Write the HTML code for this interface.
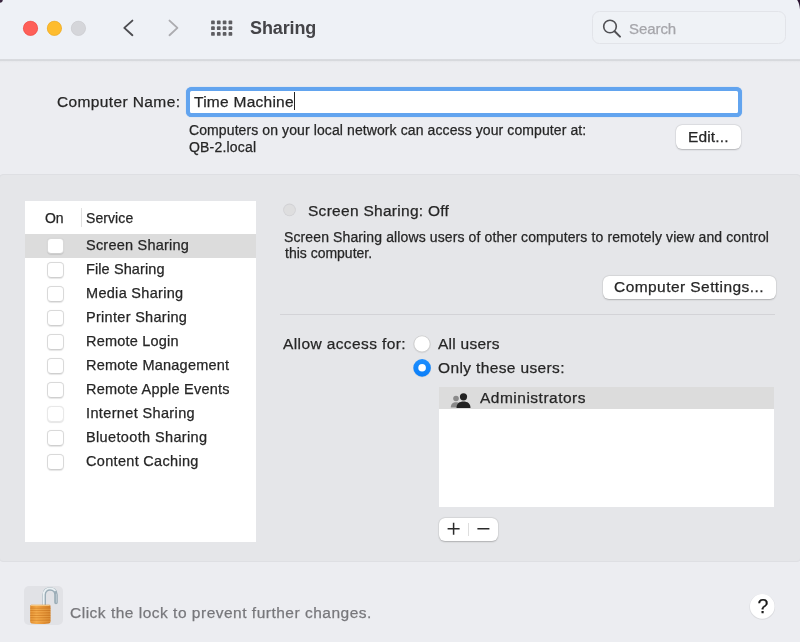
<!DOCTYPE html>
<html lang="en">
<head>
<meta charset="utf-8">
<title>Sharing</title>
<style>
*{box-sizing:border-box;margin:0;padding:0}
html,body{width:800px;height:642px;overflow:hidden;background:#ecedf1}
body{filter:blur(.35px);position:relative;font-family:"Liberation Sans",sans-serif;color:#262626;font-size:15px}
.abs{position:absolute}
.t{will-change:transform;-webkit-text-stroke:.25px currentColor;position:absolute;white-space:nowrap;line-height:20px;height:20px}
#toolbar{left:0;top:0;width:800px;height:59px;background:#eef1f6}
#tbline{left:0;top:58.6px;width:800px;height:4.4px;background:linear-gradient(#eef1f6 0,#d6d8dc 14%,#d7d9dd 38%,#e6e7eb 52%,#ecedf1 100%)}
.corner{width:8px;height:8px;background:#2a2230}
.tl{width:14.6px;height:14.6px;border-radius:50%;top:21.3px}
#group{left:-1px;top:174px;width:802px;height:387.7px;background:#e5e6e9;border-radius:4px;border:1.2px solid #dedfe3}
#list{left:24.5px;top:201px;width:231.7px;height:340.7px;background:#fff}
.cb{position:absolute;left:47.3px;width:16.3px;height:16px;border-radius:4.2px;background:#fff;border:1px solid #d9d9d9;border-bottom-color:#cfcfcf;box-shadow:0 .5px 1px rgba(0,0,0,.1)}
.btn{position:absolute;background:#fff;border-radius:6px;box-shadow:0 0 0 0.5px rgba(0,0,0,.05),0 .6px 1.6px rgba(0,0,0,.22)}
.radio{position:absolute;width:16px;height:16px;border-radius:50%}
</style>
</head>
<body>
<div class="abs" id="toolbar"></div>
<div class="abs" id="tbline"></div>

<!-- traffic lights -->
<svg class="abs" style="left:20px;top:18px" width="72" height="22" viewBox="0 0 72 22">
  <circle cx="10.5" cy="10.3" r="7.4" fill="#fe5f58"/><circle cx="10.5" cy="10.3" r="7.15" fill="none" stroke="#e9453e" stroke-width=".5"/>
  <circle cx="34.4" cy="10.3" r="7.4" fill="#febc2e"/><circle cx="34.4" cy="10.3" r="7.15" fill="none" stroke="#e3a325" stroke-width=".5"/>
  <circle cx="58.4" cy="10.3" r="7.4" fill="#d5d6da"/><circle cx="58.4" cy="10.3" r="7.15" fill="none" stroke="#c6c7cb" stroke-width=".5"/>
</svg>

<!-- nav icons -->
<svg class="abs" style="left:118px;top:14px" width="120" height="28" viewBox="0 0 120 28">
  <path d="M14.4 6.6 L6.3 13.9 L14.4 21.2" fill="none" stroke="#4c4c50" stroke-width="1.9" stroke-linecap="round" stroke-linejoin="round"/>
  <path d="M51.5 6.6 L59.4 13.9 L51.5 21.2" fill="none" stroke="#acacb0" stroke-width="1.9" stroke-linecap="round" stroke-linejoin="round"/>
  <g fill="#5e5e62"><rect x="93.10" y="6.60" width="3.7" height="3.7" rx=".9"/><rect x="98.92" y="6.60" width="3.7" height="3.7" rx=".9"/><rect x="104.74" y="6.60" width="3.7" height="3.7" rx=".9"/><rect x="110.56" y="6.60" width="3.7" height="3.7" rx=".9"/><rect x="93.10" y="12.35" width="3.7" height="3.7" rx=".9"/><rect x="98.92" y="12.35" width="3.7" height="3.7" rx=".9"/><rect x="104.74" y="12.35" width="3.7" height="3.7" rx=".9"/><rect x="110.56" y="12.35" width="3.7" height="3.7" rx=".9"/><rect x="93.10" y="18.10" width="3.7" height="3.7" rx=".9"/><rect x="98.92" y="18.10" width="3.7" height="3.7" rx=".9"/><rect x="104.74" y="18.10" width="3.7" height="3.7" rx=".9"/><rect x="110.56" y="18.10" width="3.7" height="3.7" rx=".9"/></g>
</svg>
<div class="t" id="title" style="-webkit-text-stroke:0;left:249.87px;top:18px;font-size:18px;font-weight:bold;color:#444448;letter-spacing:-0.115px">Sharing</div>

<!-- search -->
<div class="abs" id="search" style="left:592.2px;top:11.3px;width:193.8px;height:33px;border-radius:7.5px;border:1px solid #e2e4e9;background:#eff2f6"></div>
<svg class="abs" style="left:599px;top:16px" width="24" height="24" viewBox="0 0 24 24"><circle cx="11" cy="10.5" r="6.3" fill="none" stroke="#505054" stroke-width="1.6"/><path d="M15.6 15.2 L21 20.6" stroke="#505054" stroke-width="2" stroke-linecap="round"/></svg>
<div class="t" id="searchtxt" style="left:628.66px;top:18.6px;font-size:15px;color:#a5a5aa;letter-spacing:-0.071px">Search</div>

<!-- computer name -->
<div class="t" id="cnlabel" style="left:56.52px;top:92.3px;font-size:15.5px;letter-spacing:0.379px">Computer Name:</div>
<div class="abs" id="field" style="left:186.1px;top:86.9px;width:556.2px;height:30.1px;border-radius:5.5px;background:#fff;border:4px solid #62a4ef;box-shadow:0 0 .8px #62a4ef"></div>
<div class="t" id="cnvalue" style="left:194.30px;top:92.3px;font-size:15.5px;letter-spacing:0.260px">Time Machine</div>
<div class="abs" style="left:294px;top:92.3px;width:1.2px;height:17.6px;background:#222"></div>
<div class="t" id="info1" style="left:188.75px;top:120px;font-size:14px;letter-spacing:0.099px">Computers on your local network can access your computer at:</div>
<div class="t" id="info2" style="left:189.33px;top:136.6px;font-size:14px;letter-spacing:0.191px">QB-2.local</div>
<div class="btn" id="editbtn" style="left:676px;top:125px;width:64.5px;height:24.4px"></div>
<div class="t" id="edittxt" style="left:687.88px;top:127.3px;font-size:15.5px;letter-spacing:0.134px">Edit...</div>

<!-- group box -->
<div class="abs" id="group"></div>

<!-- service list -->
<div class="abs" id="list"></div>
<div class="abs" style="left:24.5px;top:234.2px;width:231.7px;height:23.6px;background:#dcdcdc"></div>
<div class="abs" style="left:80.8px;top:208.3px;width:1px;height:19px;background:#e0e0e0"></div>
<div class="t" id="hon" style="left:45.37px;top:207.7px;font-size:14px;letter-spacing:-0.163px">On</div>
<div class="t" id="hservice" style="left:85.9px;top:207.7px;font-size:14px;letter-spacing:0.080px">Service</div>

<div class="cb" style="top:238.3px"></div>
<div class="cb" style="top:262.3px"></div>
<div class="cb" style="top:286.3px"></div>
<div class="cb" style="top:310.3px"></div>
<div class="cb" style="top:334.3px"></div>
<div class="cb" style="top:358.3px"></div>
<div class="cb" style="top:382.3px"></div>
<div class="cb" style="top:406.3px;border-color:#e8e8e8"></div>
<div class="cb" style="top:430.3px"></div>
<div class="cb" style="top:454.3px"></div>

<div class="t s" id="s1" style="left:85.6px;top:235px;letter-spacing:0.221px">Screen Sharing</div>
<div class="t s" id="s2" style="left:85.6px;top:259px;letter-spacing:0.104px">File Sharing</div>
<div class="t s" id="s3" style="left:85.6px;top:283px;letter-spacing:0.300px">Media Sharing</div>
<div class="t s" id="s4" style="left:85.6px;top:307px;letter-spacing:0.300px">Printer Sharing</div>
<div class="t s" id="s5" style="left:85.6px;top:331px;letter-spacing:0.198px">Remote Login</div>
<div class="t s" id="s6" style="left:85.6px;top:355px;letter-spacing:0.232px">Remote Management</div>
<div class="t s" id="s7" style="left:85.6px;top:379px;letter-spacing:0.230px">Remote Apple Events</div>
<div class="t s" id="s8" style="left:85.6px;top:403px;letter-spacing:0.363px">Internet Sharing</div>
<div class="t s" id="s9" style="left:85.6px;top:427px;letter-spacing:0.364px">Bluetooth Sharing</div>
<div class="t s" id="s10" style="left:85.6px;top:451px;letter-spacing:0.313px">Content Caching</div>

<!-- right pane -->
<svg class="abs" style="left:280px;top:200px" width="20" height="20" viewBox="0 0 20 20"><circle cx="9.5" cy="9.9" r="6.3" fill="#d1d1d4"/><circle cx="9.5" cy="9.9" r="5.5" fill="#dededf"/></svg>
<div class="t" id="status" style="left:307.67px;top:200.5px;font-size:15.5px;letter-spacing:0.282px">Screen Sharing: Off</div>
<div class="t" id="desc1" style="left:283.55px;top:227.3px;font-size:14px;letter-spacing:0.118px">Screen Sharing allows users of other computers to remotely view and control</div>
<div class="t" id="desc2" style="left:284.70px;top:243.3px;font-size:14px;letter-spacing:-0.005px">this computer.</div>
<div class="btn" id="csbtn" style="left:602.5px;top:275.5px;width:173.7px;height:23.3px"></div>
<div class="t" id="cstxt" style="left:613.96px;top:277px;font-size:15.5px;letter-spacing:0.437px">Computer Settings...</div>
<div class="abs" style="left:280px;top:314px;width:495px;height:1px;background:#d3d3d7"></div>

<div class="t" id="allow" style="left:283.16px;top:333.5px;font-size:15.5px;letter-spacing:0.390px">Allow access for:</div>

<div class="t" id="allusers" style="left:437.99px;top:334.3px;font-size:15.5px;letter-spacing:0.259px">All users</div>

<svg class="abs" style="left:408px;top:330px" width="30" height="52" viewBox="0 0 30 52">
  <defs><linearGradient id="rb" x1="0" y1="0" x2="0" y2="1"><stop offset="0" stop-color="#1e8fff"/><stop offset="1" stop-color="#0a7ef8"/></linearGradient></defs>
  <circle cx="14" cy="14.5" r="8.9" fill="#000" opacity=".06"/>
  <circle cx="14" cy="14.1" r="8.5" fill="#cdcdcd"/>
  <circle cx="14" cy="13.9" r="7.7" fill="#fff"/>
  <circle cx="14.1" cy="38.3" r="9.1" fill="#000" opacity=".06"/>
  <circle cx="14.1" cy="37.9" r="8.8" fill="url(#rb)"/>
  <circle cx="14.1" cy="37.7" r="3.8" fill="#fff"/>
</svg>
<div class="t" id="onlyusers" style="left:438.00px;top:358.3px;font-size:15.5px;letter-spacing:0.366px">Only these users:</div>

<div class="abs" id="ulist" style="left:439px;top:387px;width:335.2px;height:120px;background:#fff"></div>
<div class="abs" style="left:439px;top:387px;width:335.2px;height:22.2px;background:#dcdcdc"></div>
<svg class="abs" style="left:449px;top:390.4px" width="24" height="20" viewBox="0 0 24 20">
  <circle cx="7" cy="8.5" r="2.8" fill="#8a8a8a"/>
  <path d="M1.8 17.6 C1.8 13.8 4 12.2 7 12.2 C8.6 12.2 9.8 12.6 10.6 13.3 L9 17.6 Z" fill="#8a8a8a"/>
  <circle cx="14.5" cy="6.8" r="3.6" fill="#222"/>
  <path d="M7.5 18 C7.5 13.5 10.5 11.5 14.5 11.5 C18.5 11.5 21.5 13.5 21.5 18 Z" fill="#222"/>
</svg>
<div class="t" id="admins" style="left:479.99px;top:388.2px;font-size:15.5px;letter-spacing:0.496px">Administrators</div>

<div class="btn" id="pmbtn" style="left:438.5px;top:518px;width:59.6px;height:23.2px"></div>
<div class="abs" style="left:468px;top:522.7px;width:1px;height:13.6px;background:#dedede"></div>
<svg class="abs" style="left:438.6px;top:517.3px" width="59" height="24" viewBox="0 0 59 24"><path d="M8.6 11.7 H20.6 M14.6 5.7 V17.7 M38.4 11.7 H50.4" stroke="#2a2a2a" stroke-width="1.5" fill="none"/></svg>

<!-- bottom -->
<div class="abs" style="left:23.5px;top:585.8px;width:39.4px;height:39.4px;border-radius:5px;background:#e1e2e6"></div>
<svg class="abs" style="left:24px;top:586px" width="39" height="39" viewBox="0 0 39 39">
  <defs>
    <linearGradient id="bd" x1="0" x2="1"><stop offset="0" stop-color="#e08a2c"/><stop offset=".3" stop-color="#f3a847"/><stop offset=".55" stop-color="#e9983a"/><stop offset="1" stop-color="#cf7c26"/></linearGradient>
  </defs>
  <path d="M20.2 20 V8.8 C20.2 4.9 22.8 3 26 3 C29.2 3 32 4.9 32 8.8 V16.4" fill="none" stroke="#9badb7" stroke-width="3.6" stroke-linecap="round"/>
  <path d="M19.7 20 V8.8 C19.7 4.6 22.6 2.4 26 2.4 C28 2.4 29.8 3.1 31 4.4" fill="none" stroke="#eaf0f3" stroke-width="1.8" stroke-linecap="round"/>
  <path d="M32.4 8 V16.2" fill="none" stroke="#b9c6ce" stroke-width="1.2" stroke-linecap="round"/>
  <path d="M6.2 20.3 C6.2 19.3 6.8 18.8 7.8 18.8 H24.9 C25.9 18.8 26.5 19.3 26.5 20.3 V35.6 C26.5 36.7 25.9 37.3 24.9 37.4 C19 38.3 13.5 38.3 7.8 37.4 C6.8 37.3 6.2 36.7 6.2 35.6 Z" fill="url(#bd)"/>
  <path d="M7 19.4 H25.7" stroke="#f8d08e" stroke-width="1" opacity=".9"/>
  <g stroke="#c77520" stroke-width=".75" opacity=".75"><path d="M6.2 22.3H26.5M6.2 24.7H26.5M6.2 27.1H26.5M6.2 29.5H26.5M6.2 31.9H26.5M6.2 34.3H26.5"/></g>
  <g stroke="#f6b85c" stroke-width=".6" opacity=".7"><path d="M6.2 23.2H26.5M6.2 25.6H26.5M6.2 28H26.5M6.2 30.4H26.5M6.2 32.8H26.5M6.2 35.2H26.5"/></g>
</svg>
<div class="t" id="locktxt" style="left:70.1px;top:602.7px;font-size:15.5px;color:#77777b;letter-spacing:0.500px">Click the lock to prevent further changes.</div>

<svg class="abs" id="help" style="left:745px;top:590px" width="34" height="34" viewBox="0 0 34 34"><circle cx="17.25" cy="16.9" r="12.9" fill="#000" opacity=".07"/><circle cx="17.25" cy="16.4" r="12.3" fill="#fff"/></svg>
<div class="t" id="q" style="left:755.8px;top:596.3px;width:14px;text-align:center;font-size:19.5px;color:#1a1a1a">?</div>

<!-- window corners -->
<svg class="abs" style="left:0;top:0" width="800" height="12" viewBox="0 0 800 12">
  <path d="M0 0 H2.8 C2.6 1.7 1.7 2.6 0 2.8 Z" fill="#3b2840"/>
  <path d="M797.2 0 H800 V9.5 C799.6 5.5 798.9 2.6 797.2 0 Z" fill="#2a1430"/>
</svg>
<style>.s{font-size:14.5px;margin-top:.3px}</style>
</body>
</html>
